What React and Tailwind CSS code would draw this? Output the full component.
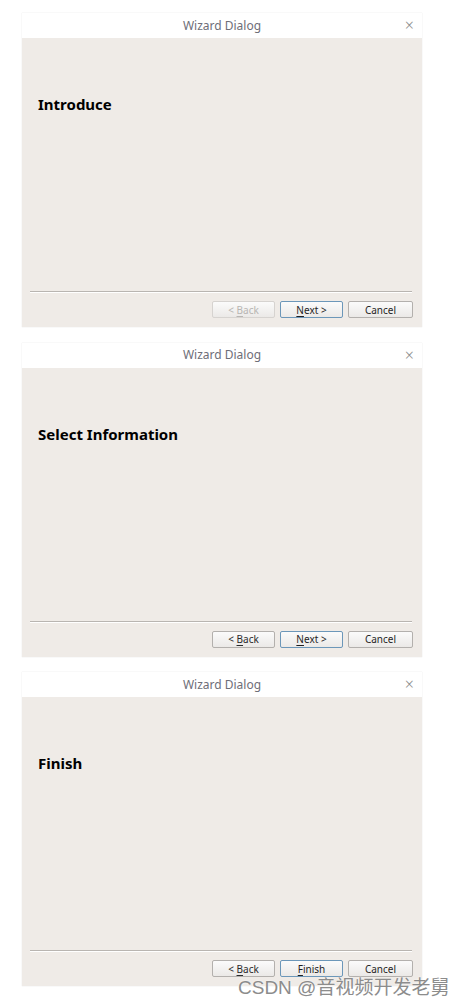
import React from 'react';

const pages = [
    { title: 'Introduce', back: false, next: 'Next' },
    { title: 'Select Information', back: true, next: 'Next' },
    { title: 'Finish', back: true, next: 'Finish' },
];

function Mnemonic({ text }) {
    return (
        <>
            <span className="underline underline-offset-2">{text[0]}</span>
            {text.slice(1)}
        </>
    );
}

function WizardDialog({ page }) {
    const btn = 'w-[63px] h-[17px] flex items-center justify-center rounded-[2px] border text-[10px] leading-none bg-gradient-to-b from-[#fbfbfb] to-[#ebe9e7]';

    return (
        <div className="w-[400px] ml-[22px] flex flex-col shadow-[0_0_1px_rgba(0,0,0,0.15)]">
            {/* Title bar */}
            <div className="h-[25px] bg-white relative flex items-center justify-center">
                <span className="text-[12px] text-[#6e6e78]">Wizard Dialog</span>
                <span className="absolute right-[8px] top-[3px] text-[16px] text-[#8a8a8a] leading-[18px] font-light">×</span>
            </div>

            {/* Body */}
            <div className="h-[289px] bg-[#efebe7] flex flex-col">
                <h2 className="pt-[56px] pl-[16px] text-[15px] leading-[20px] font-bold text-black">{page.title}</h2>
                <div className="flex-1" />
                <div className="ml-[8px] mr-[10px] h-[2px] border-t border-[#b9b5b1] border-b border-b-white" />
                <div className="mt-[8px] mb-[9px] pr-[9px] flex justify-end gap-[5px]">
                    <button className={`${btn} ${page.back ? 'border-[#b3b0ad] text-[#2b2b2b]' : 'border-[#d6d3d0] text-[#b8b5b2]'}`}>
                        &lt;&nbsp;<Mnemonic text="Back" />
                    </button>
                    <button className={`${btn} border-[#6c97b9] text-[#1f1f1f] from-[#f3f6f8] to-[#dfe6ec]`}>
                        {page.next === 'Next' ? (
                            <>
                                <Mnemonic text="Next" />&nbsp;&gt;
                            </>
                        ) : (
                            <Mnemonic text="Finish" />
                        )}
                    </button>
                    <button className={`${btn} border-[#b3b0ad] text-[#1f1f1f] w-[65px]`}>Cancel</button>
                </div>
            </div>
        </div>
    );
}

export default function App() {
    return (
        <div className="w-[463px] h-[1007px] bg-white relative pt-[13px] font-['Noto_Sans','Open_Sans',sans-serif]">
            <div className="flex flex-col gap-[15.5px]">
                {pages.map((page) => (
                    <WizardDialog key={page.title} page={page} />
                ))}
            </div>

            {/* watermark */}
            <div className="absolute left-[238px] top-[976px] text-[19px] leading-[24px] text-[#8c8c8c] whitespace-nowrap font-['Liberation_Sans','Noto_Sans_CJK_SC',sans-serif] [text-shadow:0_0_2px_white]">
                CSDN @音视频开发老舅
            </div>
        </div>
    );
}
